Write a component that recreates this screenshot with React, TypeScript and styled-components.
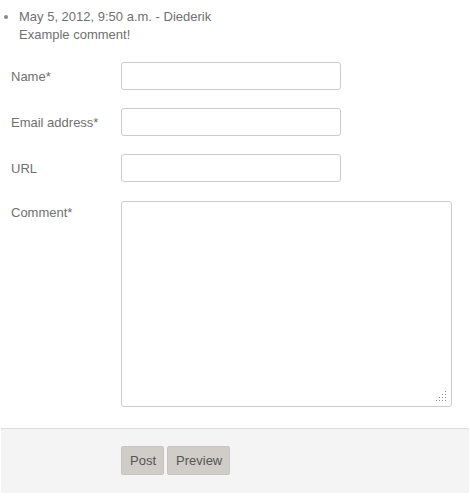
import React from 'react';
import styled, { createGlobalStyle } from 'styled-components';

// -- global --
const GlobalStyle = createGlobalStyle`
  html, body {
    margin: 0;
    padding: 0;
    background: #fff;
  }
  body {
    font-family: "Liberation Sans", Arial, sans-serif;
    font-size: 13px;
    color: #707070;
  }
`;

// -- resize grip dots --
const gripDots: [number, number][] = [
  [9, 0],
  [9, 3],
  [6, 3],
  [9, 6],
  [6, 6],
  [3, 6],
  [9, 9],
  [6, 9],
  [3, 9],
  [0, 9],
];

const ResizeGrip: React.FC = () => (
  <Grip width="10" height="10" viewBox="0 0 10 10">
    {gripDots.map(([x, y]) => (
      <rect key={`${x}-${y}`} x={x} y={y} width="1" height="1" fill="#8a8a8a" />
    ))}
  </Grip>
);

// -- main component --
const App: React.FC = () => {
  const fields = [
    { label: 'Name*', name: 'name' },
    { label: 'Email address*', name: 'email' },
    { label: 'URL', name: 'url' },
  ];

  return (
    <Page>
      <GlobalStyle />
      <CommentList>
        <CommentItem>
          <CommentMeta>May 5, 2012, 9:50 a.m. - Diederik</CommentMeta>
          <CommentBody>Example comment!</CommentBody>
        </CommentItem>
      </CommentList>

      <CommentForm onSubmit={(e) => e.preventDefault()}>
        <Fields>
          {fields.map((f) => (
            <Row key={f.name}>
              <Label htmlFor={f.name}>{f.label}</Label>
              <TextInput id={f.name} type="text" />
            </Row>
          ))}
          <Row $top>
            <Label htmlFor="comment" $top>
              Comment*
            </Label>
            <TextAreaWrap>
              <TextArea id="comment" />
              <ResizeGrip />
            </TextAreaWrap>
          </Row>
        </Fields>
        <Actions>
          <Button type="submit">Post</Button>
          <Button type="button">Preview</Button>
        </Actions>
      </CommentForm>
    </Page>
  );
};

// -- styled components --

const Page = styled.div`
  width: 470px;
`;

const CommentList = styled.ul`
  margin: 7px 0 0;
  padding: 0 0 0 19px;
  list-style: disc;

  li::marker {
    color: #888;
    font-size: 14px;
  }
`;

const CommentItem = styled.li`
  line-height: 18px;
  font-size: 13px;
`;

const CommentMeta = styled.div``;

const CommentBody = styled.div``;

const CommentForm = styled.form`
  margin: 18px 0 0;
`;

const Fields = styled.div`
  display: flex;
  flex-direction: column;
  gap: 18px;
  padding-left: 11px;
`;

const Row = styled.div<{ $top?: boolean }>`
  display: flex;
  align-items: ${(p) => (p.$top ? 'flex-start' : 'center')};
`;

const Label = styled.label<{ $top?: boolean }>`
  width: 110px;
  flex: none;
  color: #707070;
  font-size: 13px;
  padding-top: ${(p) => (p.$top ? '5px' : '0')};
`;

const TextInput = styled.input`
  box-sizing: border-box;
  width: 220px;
  height: 28px;
  margin: 0;
  padding: 4px 6px;
  border: 1px solid #ccc;
  border-radius: 3px;
  background: #fff;
  font: inherit;
  color: #555;
  outline: none;
`;

const TextAreaWrap = styled.div`
  position: relative;
  display: flex;
  margin-top: 1px;
`;

const TextArea = styled.textarea`
  box-sizing: border-box;
  width: 331px;
  height: 206px;
  margin: 0;
  padding: 4px 6px;
  border: 1px solid #ccc;
  border-radius: 3px;
  background: #fff;
  font: inherit;
  color: #555;
  outline: none;
  resize: none;
`;

const Grip = styled.svg`
  position: absolute;
  right: 6px;
  bottom: 6px;
  pointer-events: none;
`;

const Actions = styled.div`
  display: flex;
  gap: 3px;
  margin: 21px 1px 0;
  padding: 17px 0 18px 120px;
  background: #f4f4f4;
  border-top: 1px solid #ddd;
`;

const Button = styled.button`
  box-sizing: border-box;
  height: 29px;
  margin: 0;
  padding: 0 7px 0 8px;
  border: 1px solid #c8c4c0;
  border-radius: 2px;
  background: #d0ccc8;
  color: #555;
  font-family: "Liberation Sans", Arial, sans-serif;
  font-size: 13px;
  cursor: pointer;
`;

// -- finally export part --

export default App;
